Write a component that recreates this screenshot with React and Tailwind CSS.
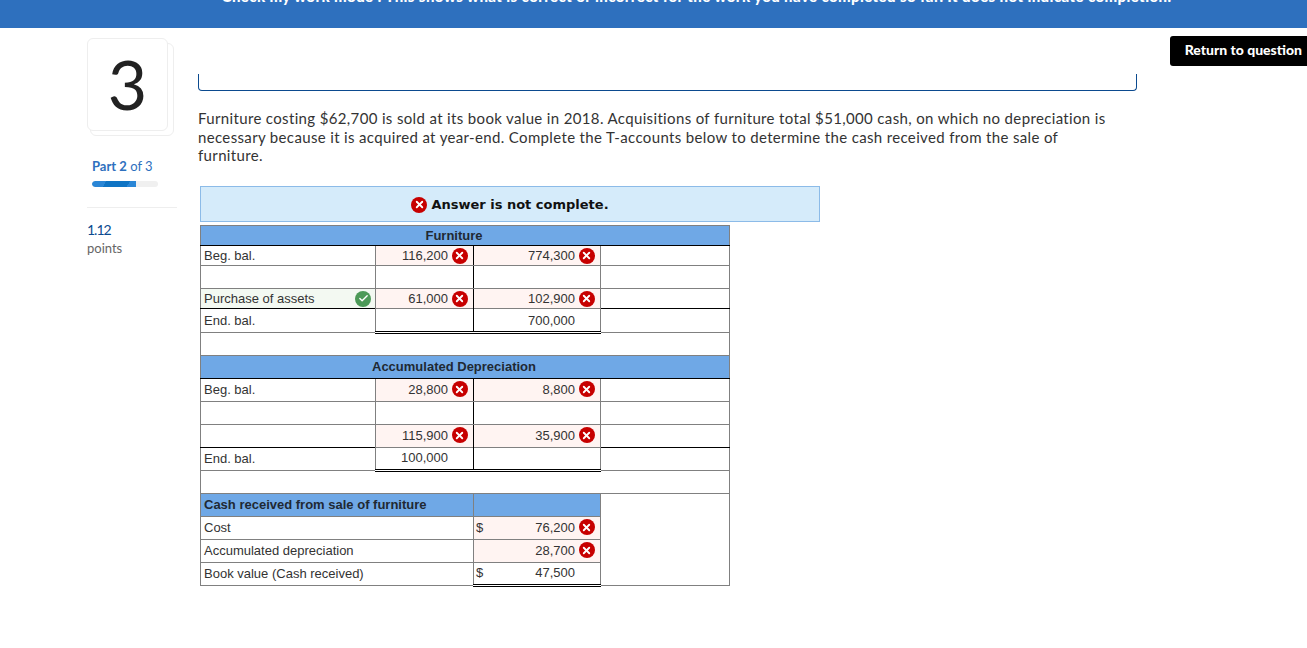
import { Check, X } from 'lucide-react';

const bad = 'bg-[#fff4f2]';
const base = 'border border-[#808080] p-0 px-[3px] align-middle overflow-hidden whitespace-nowrap';
const row23 = 'h-[23px] [&>td]:pb-[2px]';

function WrongIcon() {
  return (
    <span className="w-4 h-4 rounded-full bg-[#c70000] inline-flex items-center justify-center shrink-0">
      <X className="w-[11px] h-[11px] text-white" strokeWidth={4} />
    </span>
  );
}

function RightIcon() {
  return (
    <span className="w-4 h-4 rounded-full bg-[#4c9a58] inline-flex items-center justify-center shrink-0">
      <Check className="w-[11px] h-[11px] text-white" strokeWidth={3} />
    </span>
  );
}

function Amount({ value, wrong, blackBottom, blackRight, doubleLine, prefix }) {
  return (
    <td
      className={`${base} ${wrong ? bad : ''} ${blackBottom ? 'border-b-black' : ''} ${blackRight ? 'border-r-black' : ''} ${doubleLine ? 'border-b-[3px] border-b-black border-double' : ''}`}
    >
      <div className="flex items-center">
        {prefix && <span className="w-[10px] -ml-[1px]">{prefix}</span>}
        <span className="ml-auto flex items-center justify-end">
          <span>{value}</span>
          <span className="w-[21px] ml-[1px] flex justify-center">{wrong && <WrongIcon />}</span>
        </span>
      </div>
    </td>
  );
}

function TRow({ h, label, left, right, leftWrong, rightWrong, ok, total, blackBottom }) {
  return (
    <tr className={h}>
      <td className={`${base} ${ok ? 'bg-[#f3f9f2]' : ''} ${blackBottom ? 'border-b-black' : ''}`}>
        <div className="flex items-center justify-between pr-[1px]">
          <span>{label}</span>
          {ok && <RightIcon />}
        </div>
      </td>
      <Amount value={left} wrong={leftWrong} doubleLine={total} blackBottom={blackBottom} blackRight />
      <Amount value={right} wrong={rightWrong} doubleLine={total} blackBottom={blackBottom} />
      <td className={`${base} ${blackBottom ? 'border-b-black' : ''}`}></td>
    </tr>
  );
}

function BlueHeader({ h, children }) {
  return (
    <tr className={h}>
      <td colSpan={4} className="border border-[#808080] border-b-black bg-[#6fa8e6] p-0 pr-[22px] text-center font-bold text-[#1f2933]">
        {children}
      </td>
    </tr>
  );
}

function App() {
  return (
    <div className="w-[1307px] h-[648px] bg-white overflow-hidden font-['Lato',sans-serif]">
      <div className="h-[28px] bg-[#2e70be] overflow-hidden text-center text-white font-black text-[15px] tracking-[0.4px] leading-[18px] pl-[86px]">
        <div className="-mt-[13px] whitespace-nowrap">
          Check my work mode : This shows what is correct or incorrect for the work you have completed so far. It does not indicate completion.
        </div>
      </div>

      <div className="flex pl-[87px]">
        <aside className="w-[90px] pt-[10px] shrink-0">
          <div className="relative w-[81px] h-[93px]">
            <div className="absolute left-[3px] top-[5px] w-[84px] h-[93px] rounded-[6px] border border-[#eeeeee] bg-white"></div>
            <div className="absolute inset-0 pb-[2px] rounded-[6px] border border-[#eeeeee] bg-white flex items-center justify-center text-[68px] font-normal text-[#222222]">
              3
            </div>
          </div>
          <div className="mt-[27px] pl-[5px] text-[13px] leading-4 text-[#2e70be]">
            <b>Part 2</b> of 3
          </div>
          <div className="ml-[5px] mt-[7px] w-[66px] h-[6px] rounded-full bg-[#f0f0f0] overflow-hidden">
            <div className="w-[44px] h-full rounded-l-full bg-[linear-gradient(120deg,#2a86d6_30%,#0f74c4_30%,#0f74c4_80%,#2a86d6_80%)]"></div>
          </div>
          <div className="mt-[20px] border-t border-[#eeeeee]"></div>
          <div className="mt-[14px] text-[14px] tracking-[-1px] leading-4 text-[#0b4a8f]">1.12</div>
          <div className="mt-[2px] text-[13px] leading-4 text-[#666666]">points</div>
        </aside>

        <main className="ml-[21px] w-[939px] shrink-0">
          <div className="mt-[46px] h-[17px] border border-t-0 border-[#0b4a8f] rounded-b-[4px]"></div>
          <p className="mt-[18px] w-[925px] text-[15px] tracking-[0.35px] leading-[18.5px] text-[#333333]">
            Furniture costing $62,700 is sold at its book value in 2018. Acquisitions of furniture total $51,000 cash, on which no depreciation is necessary because it is acquired at year-end. Complete the T-accounts below to determine the cash received from the sale of furniture.
          </p>

          <div className="ml-[2px] mt-[21.5px] w-[620px] h-[36px] pt-[1px] bg-[#d5ebfa] border border-[#8cbbe8] flex items-center justify-center gap-[4px] font-['DejaVu_Sans',sans-serif] font-bold text-[13px] text-[#111111]">
            <WrongIcon />
            Answer is not complete.
          </div>

          <table className="ml-[2px] mt-[3px] w-[529px] table-fixed border-collapse font-['Liberation_Sans',sans-serif] text-[13px] leading-[15px] text-[#333333]">
            <colgroup>
              <col className="w-[175px]" />
              <col className="w-[98px]" />
              <col className="w-[127px]" />
              <col className="w-[129px]" />
            </colgroup>
            <tbody>
              <BlueHeader h="h-[20px]">Furniture</BlueHeader>
              <TRow h="h-[20px]" label="Beg. bal." left="116,200" right="774,300" leftWrong rightWrong />
              <TRow h="h-[23px]" />
              <TRow h="h-[20px]" label="Purchase of assets" ok left="61,000" right="102,900" leftWrong rightWrong blackBottom />
              <TRow h="h-[24px]" label="End. bal." right="700,000" total />
              <tr className="h-[23px]"><td colSpan={4} className={base}></td></tr>
              <BlueHeader h={row23}>Accumulated Depreciation</BlueHeader>
              <TRow h={row23} label="Beg. bal." left="28,800" right="8,800" leftWrong rightWrong />
              <TRow h={row23} />
              <TRow h={row23} left="115,900" right="35,900" leftWrong rightWrong blackBottom />
              <TRow h={row23} label="End. bal." left="100,000" total />
              <tr className="h-[23px]"><td colSpan={4} className={base}></td></tr>
              <tr className={row23}>
                <td colSpan={2} className={`${base} bg-[#6fa8e6] font-bold text-[#1f2933]`}>Cash received from sale of furniture</td>
                <td className={`${base} bg-[#6fa8e6]`}></td>
                <td rowSpan={4} className={base}></td>
              </tr>
              <tr className={row23}>
                <td colSpan={2} className={base}>Cost</td>
                <Amount value="76,200" wrong prefix="$" />
              </tr>
              <tr className={row23}>
                <td colSpan={2} className={base}>Accumulated depreciation</td>
                <Amount value="28,700" wrong blackBottom />
              </tr>
              <tr className={row23}>
                <td colSpan={2} className={base}>Book value (Cash received)</td>
                <Amount value="47,500" prefix="$" doubleLine />
              </tr>
            </tbody>
          </table>
        </main>

        <div className="ml-[33px] mt-[8px] w-[137px] h-[30px] pb-[3px] shrink-0 bg-black rounded-l-[3px] text-white font-black text-[14px] flex items-center justify-end pr-[5px]">
          Return to question
        </div>
      </div>
    </div>
  );
}

export default App;
